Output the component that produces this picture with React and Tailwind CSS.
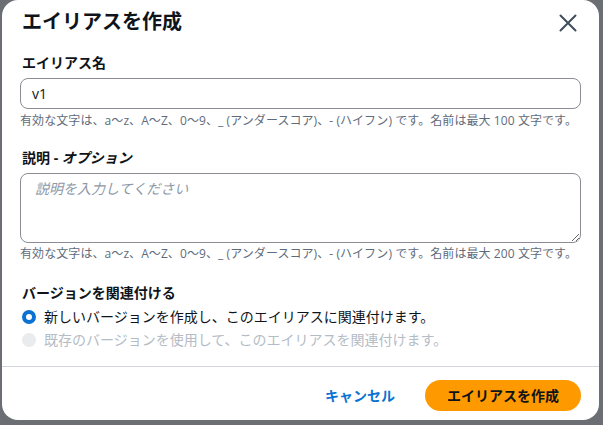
import React from "react";

export default function App() {
  const hint1 =
    "有効な文字は、a～z、A～Z、0～9、_ (アンダースコア)、- (ハイフン) です。名前は最大 100 文字です。";
  const hint2 =
    "有効な文字は、a～z、A～Z、0～9、_ (アンダースコア)、- (ハイフン) です。名前は最大 200 文字です。";
  return (
    <div
      className="w-[603px] h-[425px] bg-[#6b6e73] overflow-hidden pl-[2px]"
      style={{ fontFamily: '"Open Sans", "Noto Sans CJK JP", sans-serif' }}
    >
      <div className="w-[597px] h-[420px] bg-white rounded-[16px] flex flex-col text-[#0f141a]">
        {/* header */}
        <div className="flex items-center justify-between pl-[20px] pr-[22px] pt-[8px] h-[36px]">
          <h1 className="text-[20px] leading-[28px] font-bold">エイリアスを作成</h1>
          <svg width="18" height="18" viewBox="0 0 18 18" className="mt-[2px]">
            <path d="M1.5 1.5 L16.5 16.5 M16.5 1.5 L1.5 16.5" stroke="#414d5c" strokeWidth="2" strokeLinecap="round" />
          </svg>
        </div>
        {/* body */}
        <div className="px-[18px] flex flex-col">
          <label className="mt-[17px] pl-[2px] text-[14px] leading-[20px] font-bold">エイリアス名</label>
          <div className="mt-[5px] h-[31px] border border-[#8c8c94] rounded-[8px] flex items-center px-[11px] text-[14px]">
            v1
          </div>
          <p className="mt-[4px] text-[12px] leading-[16px] text-[#5f6b7a] whitespace-nowrap tracking-[0.08px]">{hint1}</p>

          <label className="mt-[19px] pl-[2px] text-[14px] leading-[20px] font-bold">
            説明 - <span className="italic">オプション</span>
          </label>
          <textarea
            className="mt-[5px] h-[70px] border border-[#8c8c94] rounded-[8px] px-[14px] py-[4px] text-[14px] leading-[22px] resize-y outline-none placeholder:text-[#8d99a8] placeholder:italic block"
            placeholder="説明を入力してください"
          />
          <p className="mt-[3px] text-[12px] leading-[16px] text-[#5f6b7a] whitespace-nowrap tracking-[0.08px]">{hint2}</p>

          <div className="mt-[21px] pl-[2px] text-[14px] leading-[20px] font-bold">バージョンを関連付ける</div>
          <div className="mt-[4px] flex items-center gap-[8px] h-[20px] pl-[2px]">
            <span className="w-[14px] h-[14px] rounded-full border-[4px] border-[#0972d3] bg-white box-border" />
            <span className="text-[14px] leading-[20px]">新しいバージョンを作成し、このエイリアスに関連付けます。</span>
          </div>
          <div className="mt-[3px] flex items-center gap-[8px] h-[20px] pl-[2px]">
            <span className="w-[14px] h-[14px] rounded-full bg-[#e9ebed]" />
            <span className="text-[14px] leading-[20px] text-[#b4bcc6]">既存のバージョンを使用して、このエイリアスを関連付けます。</span>
          </div>
        </div>
        <div className="mt-[16px] h-px bg-[#d1d5db]" />
        {/* footer */}
        <div className="flex items-center justify-end gap-[30px] pr-[18px] mt-[13px]">
          <span className="text-[14px] font-bold text-[#0972d3]">キャンセル</span>
          <button className="h-[31px] w-[156px] rounded-full bg-[#ff9900] text-[14px] font-bold text-[#0f141a]">
            エイリアスを作成
          </button>
        </div>
      </div>
    </div>
  );
}
